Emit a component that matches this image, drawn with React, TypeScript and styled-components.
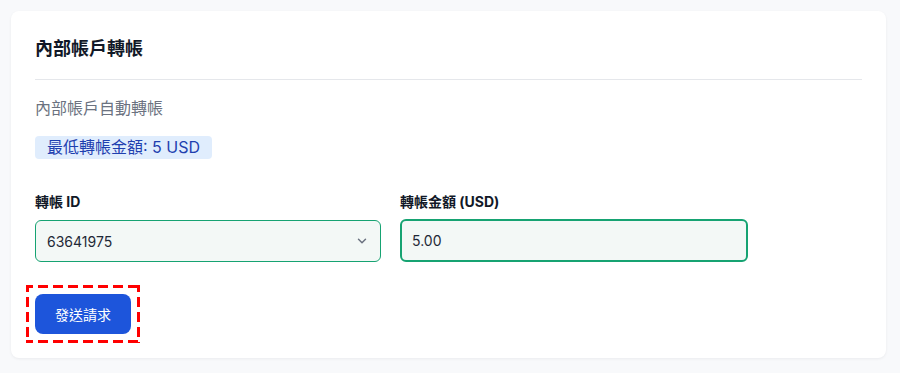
import React, { useState } from 'react';
import styled, { createGlobalStyle } from 'styled-components';

const GlobalStyle = createGlobalStyle`
  * { box-sizing: border-box; }
  body {
    margin: 0;
    background: #f8f9fb;
    font-family: Inter, "Noto Sans CJK TC", "Noto Sans", sans-serif;
    color: #111827;
  }
`;

const Page = styled.div`
  padding: 11px 14px 15px 11px;
`;

const Card = styled.section`
  background: #ffffff;
  border-radius: 8px;
  box-shadow: 0 1px 3px rgba(15, 23, 42, 0.06);
  padding: 25px 24px 24px;
`;

const Title = styled.h2`
  margin: 0;
  font-size: 18px;
  font-weight: 700;
  line-height: 26px;
  color: #111827;
  padding-bottom: 17px;
  border-bottom: 1px solid #e5e7eb;
`;

const Subtitle = styled.p`
  margin: 17px 0 0;
  font-size: 16px;
  line-height: 22px;
  color: #6b7280;
`;

const Badge = styled.span`
  display: block;
  width: fit-content;
  margin-top: 17px;
  padding: 1px 12px;
  border-radius: 4px;
  background: #e0edfd;
  color: #1e40af;
  font-size: 16px;
  line-height: 21px;
`;

const FieldGrid = styled.div`
  display: grid;
  grid-template-columns: 346px 348px;
  column-gap: 19px;
  margin-top: 34px;
`;

const Field = styled.div`
  display: flex;
  flex-direction: column;
  gap: 9px;
`;

const Label = styled.label`
  font-size: 14px;
  font-weight: 700;
  line-height: 18px;
  color: #111827;
`;

const SelectBox = styled.div`
  display: flex;
  align-items: center;
  justify-content: space-between;
  height: 42px;
  padding: 0 11px 0 11px;
  border: 1px solid #16a372;
  border-radius: 6px;
  background: #f3f8f6;
  font-size: 14px;
  color: #1f2937;
`;

const Input = styled.input`
  height: 43px;
  margin-top: -1px;
  padding: 0 10px;
  border: 2px solid #16a372;
  border-radius: 6px;
  background: #f3f8f6;
  font-family: inherit;
  font-size: 14px;
  color: #1f2937;
  outline: none;
`;

const Actions = styled.div`
  margin-top: 32px;
  display: flex;
`;

const dashH = 'repeating-linear-gradient(90deg, #ff0000 0 10px, transparent 10px 15px)';
const dashV = 'repeating-linear-gradient(180deg, #ff0000 0 10px, transparent 10px 15px)';

const SubmitButton = styled.button<{ $highlight?: boolean }>`
  position: relative;
  height: 40px;
  padding: 0 20px;
  border: none;
  border-radius: 8px;
  background: #1d55db;
  color: #ffffff;
  font-family: inherit;
  font-size: 14px;
  cursor: pointer;

  &::after {
    content: '';
    display: ${(p) => (p.$highlight ? 'block' : 'none')};
    position: absolute;
    inset: -9px;
    pointer-events: none;
    background:
      ${dashH} -3px 0 / calc(100% + 3px) 3px no-repeat,
      ${dashH} -3px 100% / calc(100% + 3px) 3px no-repeat,
      ${dashV} 0 -3px / 3px calc(100% + 3px) no-repeat,
      ${dashV} 100% -3px / 3px calc(100% + 3px) no-repeat;
  }
`;

const Chevron = () => (
  <svg width="14" height="14" viewBox="0 0 24 24" fill="none" stroke="#6b7280" strokeWidth="2.5" strokeLinecap="round" strokeLinejoin="round">
    <path d="M6 9l6 6 6-6" />
  </svg>
);

export default function App() {
  const [amount, setAmount] = useState('5.00');
  return (
    <>
      <GlobalStyle />
      <Page>
        <Card>
          <Title>內部帳戶轉帳</Title>
          <Subtitle>內部帳戶自動轉帳</Subtitle>
          <Badge>最低轉帳金額: 5 USD</Badge>
          <FieldGrid>
            <Field>
              <Label>轉帳 ID</Label>
              <SelectBox>
                <span>63641975</span>
                <Chevron />
              </SelectBox>
            </Field>
            <Field>
              <Label>轉帳金額 (USD)</Label>
              <Input value={amount} onChange={(e) => setAmount(e.target.value)} />
            </Field>
          </FieldGrid>
          <Actions>
            <SubmitButton $highlight>發送請求</SubmitButton>
          </Actions>
        </Card>
      </Page>
    </>
  );
}
